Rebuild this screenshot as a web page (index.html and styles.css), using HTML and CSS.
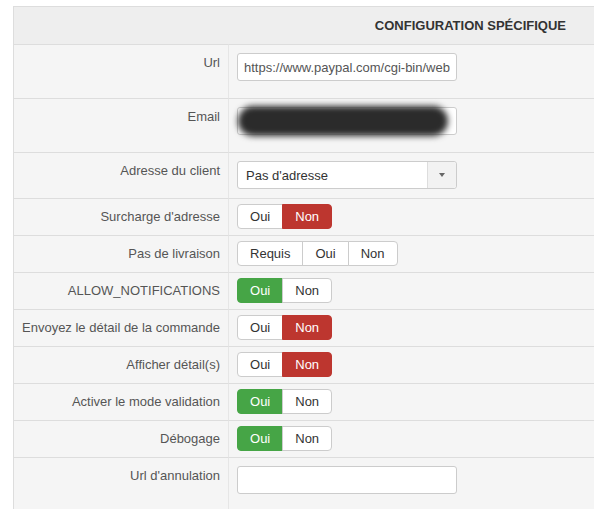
FILE: index.html
```html
<!DOCTYPE html>
<html lang="fr">
<head>
    <meta charset="UTF-8">
    <meta name="viewport" content="width=device-width, initial-scale=1.0">
    <title>Configuration spécifique</title>
    <link rel="stylesheet" href="styles.css">
</head>
<body>
    <table class="config">
        <thead>
            <tr>
                <th colspan="2">Configuration spécifique</th>
            </tr>
        </thead>
        <tbody>
            <tr>
                <td class="label">Url</td>
                <td><input type="text" class="field" value="https://www.paypal.com/cgi-bin/webscr"></td>
            </tr>
            <tr>
                <td class="label">Email</td>
                <td>
                    <div class="masked">
                        <input type="text" class="field" value="">
                        <div class="mask"></div>
                    </div>
                </td>
            </tr>
            <tr>
                <td class="label">Adresse du client</td>
                <td>
                    <div class="select">
                        <span class="select-text">Pas d'adresse</span>
                        <span class="select-caret"><b></b></span>
                    </div>
                </td>
            </tr>
            <tr>
                <td class="label">Surcharge d'adresse</td>
                <td class="btns">
                    <div class="btn-group"><span class="btn">Oui</span><span class="btn no">Non</span></div>
                </td>
            </tr>
            <tr>
                <td class="label">Pas de livraison</td>
                <td class="btns">
                    <div class="btn-group"><span class="btn">Requis</span><span class="btn">Oui</span><span class="btn">Non</span></div>
                </td>
            </tr>
            <tr>
                <td class="label">ALLOW_NOTIFICATIONS</td>
                <td class="btns">
                    <div class="btn-group"><span class="btn yes">Oui</span><span class="btn">Non</span></div>
                </td>
            </tr>
            <tr>
                <td class="label">Envoyez le détail de la commande</td>
                <td class="btns">
                    <div class="btn-group"><span class="btn">Oui</span><span class="btn no">Non</span></div>
                </td>
            </tr>
            <tr>
                <td class="label">Afficher détail(s)</td>
                <td class="btns">
                    <div class="btn-group"><span class="btn">Oui</span><span class="btn no">Non</span></div>
                </td>
            </tr>
            <tr>
                <td class="label">Activer le mode validation</td>
                <td class="btns">
                    <div class="btn-group"><span class="btn yes">Oui</span><span class="btn">Non</span></div>
                </td>
            </tr>
            <tr>
                <td class="label">Débogage</td>
                <td class="btns">
                    <div class="btn-group"><span class="btn yes">Oui</span><span class="btn">Non</span></div>
                </td>
            </tr>
            <tr>
                <td class="label">Url d'annulation</td>
                <td><input type="text" class="field" value=""></td>
            </tr>
        </tbody>
    </table>
</body>
</html>
```

FILE: styles.css
```css
body {
    margin: 0;
    font-family: "Liberation Sans", Arial, sans-serif;
    font-size: 13px;
    line-height: 18px;
    color: #333;
    overflow: hidden;
}
.config {
    margin: 6px 0 0 13px;
    width: 581px;
    border-collapse: separate;
    border-spacing: 0;
    border-left: 1px solid #ddd;
    border-top: 1px solid #ddd;
    background-color: #f5f5f5;
}
.config th {
    background-color: #eee;
    text-align: right;
    text-transform: uppercase;
    font-weight: bold;
    color: #333;
    padding: 10px 28px 9px 8px;
}
.config td {
    border-top: 1px solid #ddd;
    padding: 8px;
    vertical-align: top;
}
.config td.label {
    box-sizing: border-box;
    width: 215px;
    padding: 9px 8px 7px;
    text-align: right;
    white-space: nowrap;
    color: #555;
    border-right: 1px solid #e6e6e6;
}
.config td.btns {
    padding: 5px 8px 6px;
}
.field {
    display: block;
    box-sizing: border-box;
    width: 220px;
    height: 28px;
    margin: 0 0 9px;
    padding: 4px 6px;
    border: 1px solid #ccc;
    border-radius: 3px;
    background: #fff;
    font-family: inherit;
    font-size: 13px;
    color: #555;
}
.masked {
    position: relative;
    width: 220px;
}
.mask {
    position: absolute;
    left: 1px;
    top: -1px;
    width: 210px;
    height: 30px;
    border-radius: 15px;
    background: #2b2b2b;
    filter: blur(3px);
}
.select {
    display: flex;
    box-sizing: border-box;
    width: 220px;
    height: 28px;
    margin-bottom: 1px;
    border: 1px solid #ccc;
    border-radius: 3px;
    background: #fff;
    color: #333;
}
.select-text {
    flex: 1;
    padding: 5px 8px 3px;
}
.select-caret {
    display: flex;
    align-items: center;
    justify-content: center;
    width: 28px;
    border-left: 1px solid #ddd;
    background: #f2f2f2;
    border-radius: 0 3px 3px 0;
}
.select-caret b {
    width: 0;
    height: 0;
    border-left: 3px solid transparent;
    border-right: 3px solid transparent;
    border-top: 4px solid #666;
}
.btn-group {
    display: flex;
}
.btn {
    box-sizing: border-box;
    height: 25px;
    padding: 3px 12px 2px;
    border: 1px solid #ccc;
    background: #fff;
    color: #333;
    line-height: 18px;
}
.btn + .btn {
    margin-left: -1px;
}
.btn:first-child {
    border-radius: 4px 0 0 4px;
}
.btn:last-child {
    border-radius: 0 4px 4px 0;
}
.btn.no {
    background: #bd362f;
    border-color: #bd362f;
    color: #fff;
}
.btn.yes {
    background: #46a546;
    border-color: #46a546;
    color: #fff;
}
```
